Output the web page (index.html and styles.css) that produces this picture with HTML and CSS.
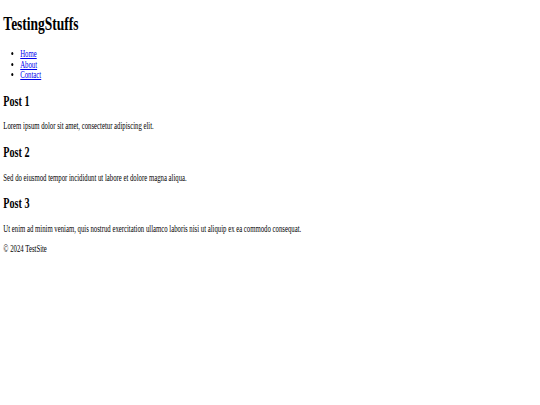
FILE: index.html
```html
<!DOCTYPE html>
<html lang="en">
<head>
<meta charset="utf-8">
<title>TestingStuffs</title>
<link rel="stylesheet" href="styles.css">
</head>
<body>
<div class="page">
  <header class="site-header">
    <h1>TestingStuffs</h1>
    <nav>
      <ul>
        <li><a href="#">Home</a></li>
        <li><a href="#">About</a></li>
        <li><a href="#">Contact</a></li>
      </ul>
    </nav>
  </header>
  <main>
    <article>
      <h2>Post 1</h2>
      <p>Lorem ipsum dolor sit amet, consectetur adipiscing elit.</p>
    </article>
    <article>
      <h2>Post 2</h2>
      <p>Sed do eiusmod tempor incididunt ut labore et dolore magna aliqua.</p>
    </article>
    <article>
      <h2>Post 3</h2>
      <p>Ut enim ad minim veniam, quis nostrud exercitation ullamco laboris nisi ut aliquip ex ea commodo consequat.</p>
    </article>
  </main>
  <footer class="site-footer">
    <p>© 2024 TestSite</p>
  </footer>
</div>
</body>
</html>
```
FILE: styles.css
```css
html, body {
  margin: 0;
  padding: 0;
  background: #ffffff;
}
.page {
  display: flow-root;
  padding: 0 4.8px;
  font-family: "Liberation Serif", "Times New Roman", serif;
  font-size: 9.6px;
  line-height: 10.7px;
  color: #000000;
  transform: scaleX(0.703);
  transform-origin: 0 0;
}
.page h1 {
  font-size: 19.2px;
  line-height: 21.6px;
  margin: 12.7px 0 14.7px;
}
.page h2 {
  font-size: 14.4px;
  line-height: 17px;
  margin: 11.7px 0;
}
.page p {
  margin: 9.4px 0;
}
.page ul {
  margin: 9.4px 0;
  padding-left: 24px;
}
.page a {
  color: #0000ee;
}
```
